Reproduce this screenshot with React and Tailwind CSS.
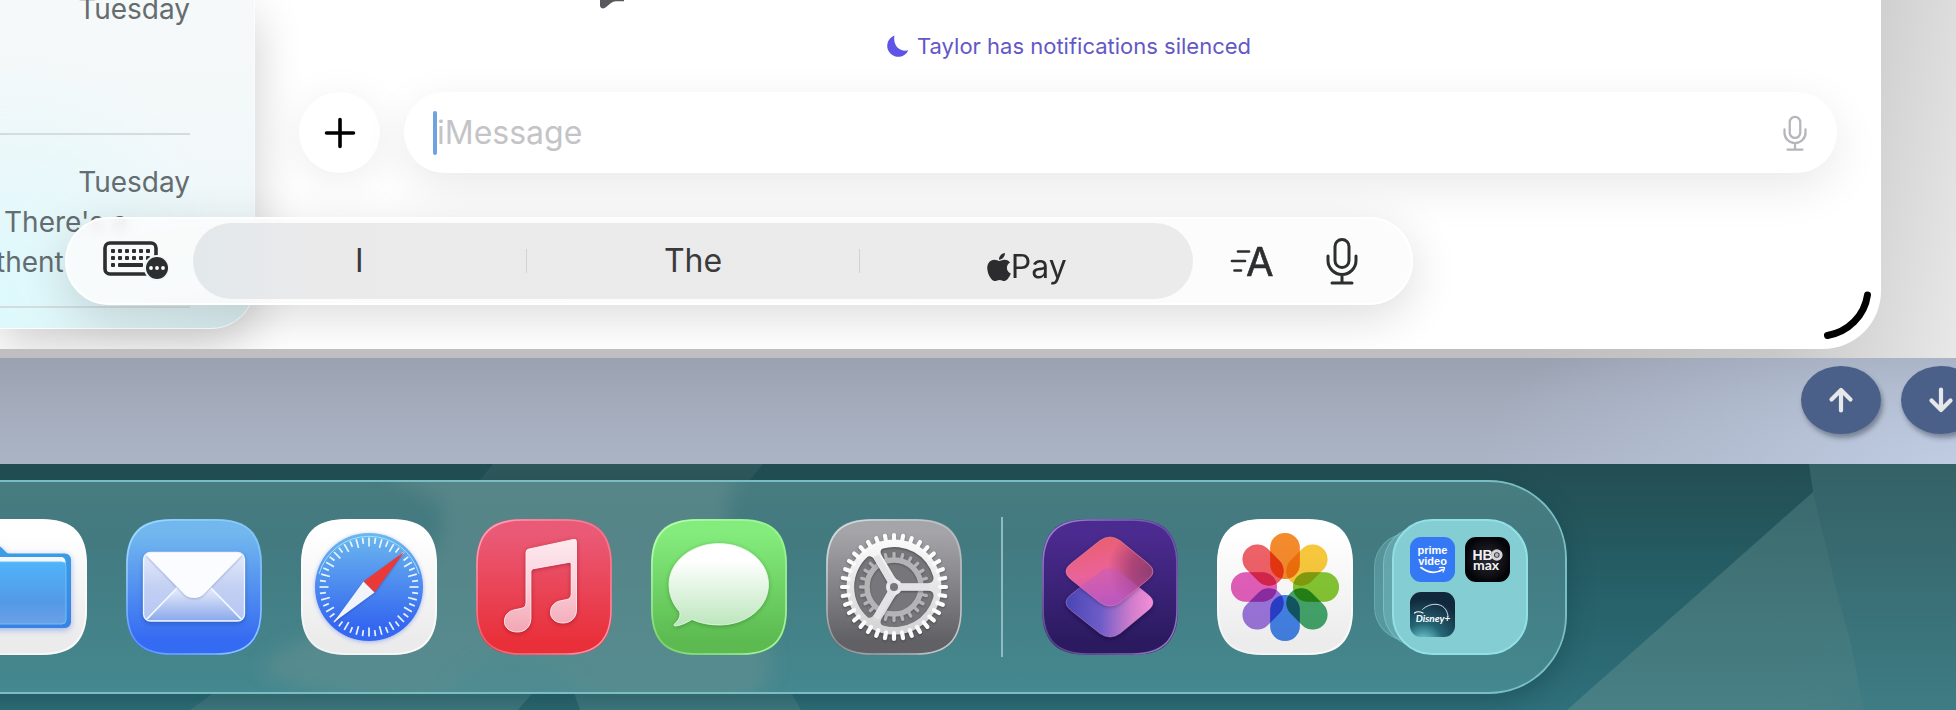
import React from "react";
import { FaApple } from "react-icons/fa6";

const SQUIRCLE =
  "M0 46C0 14 14 0 46 0H90C122 0 136 14 136 46V90C136 122 122 136 90 136H46C14 136 0 122 0 90Z";
const SQUIRCLE_EDGE =
  "M1 46C1 15 15 1 46 1H90C121 1 135 15 135 46V90C135 121 121 135 90 135H46C15 135 1 121 1 90Z";

function Tile({ id, from, to, edge, label, children }) {
  return (
    <button type="button" aria-label={label} className="block size-[136px] shrink-0">
      <svg viewBox="0 0 136 136" className="isolate block size-full">
        <defs>
          <linearGradient id={`${id}-bg`} x1="0" y1="0" x2="0" y2="1">
            <stop offset="0.1" stopColor={from} />
            <stop offset="0.9" stopColor={to} />
          </linearGradient>
          <linearGradient id={`${id}-edge`} x1="0" y1="0" x2="1" y2="1">
            <stop offset="0" stopColor={edge} />
            <stop offset="0.5" stopColor={edge} stopOpacity="0.35" />
            <stop offset="1" stopColor={edge} stopOpacity="0.9" />
          </linearGradient>
        </defs>
        <path d={SQUIRCLE} fill={`url(#${id}-bg)`} />
        {children}
        <path d={SQUIRCLE_EDGE} fill="none" stroke={`url(#${id}-edge)`} strokeWidth="1.6" />
      </svg>
    </button>
  );
}

function FilesIcon() {
  return (
    <Tile id="files" from="#ffffff" to="#ebebec" edge="#ffffff" label="Files">
      <defs>
        <linearGradient id="files-front" x1="0" y1="0" x2="0" y2="1">
          <stop offset="0" stopColor="#50b4fb" />
          <stop offset="0.65" stopColor="#5499e6" />
          <stop offset="1" stopColor="#6ba1e8" />
        </linearGradient>
        <linearGradient id="files-back" x1="0" y1="0" x2="0" y2="1">
          <stop offset="0" stopColor="#3a9fe6" />
          <stop offset="1" stopColor="#3b80e4" />
        </linearGradient>
      </defs>
      <path
        d="M16 33a6 6 0 0 1 6-6h24c3 0 4 1 6 3l3 3c1 1 2 1.500 4 1.500h55a6 6 0 0 1 6 6V103a6 6 0 0 1-6 6H22a6 6 0 0 1-6-6Z"
        fill="url(#files-back)"
        className="drop-shadow-[0_2px_3px_rgba(60,110,220,0.45)]"
      />
      <path d="M20 38h90q4 0 4.500 4.500V45H20z" fill="#f4f8fc" />
      <rect x="20" y="43" width="95" height="62" rx="4" fill="url(#files-front)" stroke="#6cc0f8" strokeWidth="1" />
    </Tile>
  );
}

function MailIcon() {
  return (
    <Tile id="mail" from="#72b8ee" to="#356af2" edge="#9fdcff" label="Mail">
      <defs>
        <linearGradient id="mail-body" x1="0" y1="0" x2="0" y2="1">
          <stop offset="0" stopColor="#e4ebfa" />
          <stop offset="0.5" stopColor="#c3d0f3" />
          <stop offset="1" stopColor="#b4c6f4" />
        </linearGradient>
        <linearGradient id="mail-bottom" x1="0" y1="0" x2="0" y2="1">
          <stop offset="0" stopColor="#e6ebf8" />
          <stop offset="1" stopColor="#8caaec" />
        </linearGradient>
      </defs>
      <rect
        x="17.500"
        y="33.500"
        width="101"
        height="68.500"
        rx="7"
        fill="url(#mail-body)"
        stroke="#eef7ff"
        strokeWidth="1.300"
        className="drop-shadow-[0_2px_2px_rgba(20,50,150,0.4)]"
      />
      <path d="M21 101L50 70H86L115 101Z" fill="url(#mail-bottom)" />
      <path d="M21 100L52 68M115 100L84 68" stroke="#f3fbff" strokeWidth="1.700" />
      <path
        d="M20 36q2-2.500 5-2.500h86q3 0 5 2.500L79 74q-4 5-11 5t-11-5Z"
        fill="#fbfcff"
        className="drop-shadow-[0_1px_1px_rgba(70,90,160,0.35)]"
      />
    </Tile>
  );
}

const SAFARI_TICKS = Array.from({ length: 48 }, (_, i) => i);

function SafariIcon() {
  return (
    <Tile id="safari" from="#ffffff" to="#ebebec" edge="#ffffff" label="Safari">
      <defs>
        <linearGradient id="safari-dial" x1="0" y1="0" x2="0" y2="1">
          <stop offset="0" stopColor="#6cb8ee" />
          <stop offset="0.85" stopColor="#3568f0" />
        </linearGradient>
      </defs>
      <circle cx="68" cy="68" r="54" fill="url(#safari-dial)" className="drop-shadow-[0_1px_2px_rgba(50,90,240,0.4)]" />
      <path d="M18 55A52 52 0 0 1 118 55" fill="none" stroke="#9fe4fb" strokeWidth="1" />
      <g stroke="#e9f5fd" strokeWidth="1.700">
        {SAFARI_TICKS.map((i) => (
          <line
            key={i}
            x1="68"
            x2="68"
            y1="18.500"
            y2={i % 2 ? 24.500 : 27.500}
            transform={`rotate(${i * 7.5} 68 68)`}
          />
        ))}
      </g>
      <g className="drop-shadow-[0_1px_1px_rgba(20,40,140,0.35)]">
        <path d="M103.500 32.500L62.500 62.500L73.500 73.500Z" fill="#e93a37" />
        <path d="M32.500 103.500L62.500 62.500L73.500 73.500Z" fill="#f1f4fa" />
      </g>
    </Tile>
  );
}

function MusicIcon() {
  return (
    <Tile id="music" from="#ea5a76" to="#e9303a" edge="#f7a9bf" label="Music">
      <defs>
        <linearGradient id="music-note" x1="0" y1="0" x2="0" y2="1">
          <stop offset="0" stopColor="#fde9ef" />
          <stop offset="0.45" stopColor="#fad3dd" />
          <stop offset="1" stopColor="#f3a6b4" />
        </linearGradient>
      </defs>
      <path
        d="M50 33.500q0-2.800 2.700-3.400L97.500 20.400q3-.6 3 2.300V91c0 8-6 13-13.500 13S74.500 99.500 74.500 93.500c0-6 3.800-10.500 10-11.700l6-1.200q4.700-1 4.700-5.500V45q0-2-2-1.700L57.500 49.700q-2.600.5-2.600 3V99c0 8.500-5.500 14-13.500 14-7.800 0-13-4.500-13-10.500 0-6.200 4-10.500 10.500-11.800l6-1.200q5.100-1 5.100-5.500Z"
        fill="url(#music-note)"
        stroke="#fff0f4"
        strokeWidth="0.900"
        className="drop-shadow-[0_1px_2px_rgba(120,0,20,0.45)]"
      />
    </Tile>
  );
}

function MessagesIcon() {
  return (
    <Tile id="messages" from="#84ec7c" to="#5cba50" edge="#baffb6" label="Messages">
      <defs>
        <linearGradient id="messages-bubble" x1="0" y1="0" x2="0" y2="1">
          <stop offset="0.2" stopColor="#ffffff" />
          <stop offset="1" stopColor="#bce6bc" />
        </linearGradient>
      </defs>
      <path
        d="M68 24.500C95.500 24.500 117.500 42.500 117.500 65.500S95.500 106 68 106C58 106 48.500 104 41 100.500C36 103.500 30 106.500 24.500 107C22.500 107 22.500 105.500 24 104.500C27.500 101.500 30 97 28.500 92.500C22 85.500 18 76 18 65.500C18 42.500 40.500 24.500 68 24.500Z"
        fill="url(#messages-bubble)"
        stroke="#ecfbec"
        strokeWidth="0.800"
        className="drop-shadow-[0_1px_2px_rgba(20,90,20,0.4)]"
      />
    </Tile>
  );
}

const OUTER_TEETH = Array.from({ length: 36 }, (_, i) => i * 10);
const INNER_TEETH = Array.from({ length: 24 }, (_, i) => i * 15);
const SPOKES = [0, 120, 240];

function SettingsIcon() {
  return (
    <Tile id="settings" from="#a5a5a9" to="#616064" edge="#d3e2e6" label="Settings">
      <defs>
        <linearGradient id="settings-gear" x1="0" y1="14" x2="0" y2="122" gradientUnits="userSpaceOnUse">
          <stop offset="0" stopColor="#fdfdfd" />
          <stop offset="1" stopColor="#cfcfd1" />
        </linearGradient>
      </defs>
      <circle cx="68" cy="68" r="42" fill="#77777b" />
      <g stroke="#b4b4b7" className="drop-shadow-[0_1px_1px_rgba(0,0,0,0.25)]">
        <circle cx="68" cy="68" r="27" fill="none" strokeWidth="5.500" />
        {INNER_TEETH.map((a) => (
          <line
            key={a}
            x1="68"
            x2="68"
            y1="40"
            y2="34.500"
            strokeWidth="3.300"
            strokeLinecap="round"
            transform={`rotate(${a} 68 68)`}
          />
        ))}
      </g>
      <g stroke="url(#settings-gear)" className="drop-shadow-[0_1px_1px_rgba(0,0,0,0.35)]">
        <path
          fillRule="evenodd"
          fill="url(#settings-gear)"
          stroke="none"
          d="M68 20.500a47.500 47.500 0 1 1 0 95a47.500 47.500 0 1 1 0-95ZM57 29.500Q53 31 55.500 36L68 57Q70.500 61.500 75 64.200H102Q108.500 64 107.300 57.500A40.500 40.500 0 0 0 57 29.500ZM57 106.500Q53 105 55.500 100L68 79Q70.500 74.500 75 71.800H102Q108.500 72 107.300 78.500A40.500 40.500 0 0 1 57 106.500ZM42 37.500Q46 36.500 48.500 41L61.500 62.500Q64 68 61.500 73.500L48.500 95Q46 99.500 42 98.500A40.500 40.500 0 0 1 42 37.500Z"
        />
        {OUTER_TEETH.map((a) => (
          <line
            key={a}
            x1="68"
            x2="68.010"
            y1="22"
            y2="16"
            strokeWidth="4.200"
            strokeLinecap="round"
            transform={`rotate(${a} 68 68)`}
          />
        ))}
      </g>
      <circle cx="68" cy="68" r="8" fill="#ececed" />
      {SPOKES.map((a) => (
        <line
          key={a}
          x1="68"
          y1="68"
          x2="104"
          y2="68.010"
          stroke="#e3e3e5"
          strokeWidth="6.500"
          transform={`rotate(${a} 68 68)`}
        />
      ))}
      <circle cx="68" cy="68" r="4" fill="#77777b" />
    </Tile>
  );
}

function ShortcutsIcon() {
  return (
    <Tile id="shortcuts" from="#4c2b90" to="#2b1a60" edge="#a58ad6" label="Shortcuts">
      <defs>
        <linearGradient id="shortcuts-low" x1="24" y1="80" x2="112" y2="84" gradientUnits="userSpaceOnUse">
          <stop offset="0" stopColor="#4a45b4" />
          <stop offset="0.4" stopColor="#6d5cc8" />
          <stop offset="0.75" stopColor="#d07dcc" />
          <stop offset="1" stopColor="#f78fd6" />
        </linearGradient>
        <linearGradient id="shortcuts-top" x1="56" y1="20" x2="68" y2="88" gradientUnits="userSpaceOnUse">
          <stop offset="0" stopColor="#ea5f70" />
          <stop offset="0.5" stopColor="#ea639a" />
          <stop offset="1" stopColor="#b653c0" />
        </linearGradient>
        <radialGradient id="shortcuts-shade" cx="108" cy="50" r="42" gradientUnits="userSpaceOnUse">
          <stop offset="0" stopColor="#7c3668" stopOpacity="0.800" />
          <stop offset="0.45" stopColor="#8c3468" stopOpacity="0.650" />
          <stop offset="1" stopColor="#8c3468" stopOpacity="0" />
        </radialGradient>
      </defs>
      <path
        d="M60 51.500Q68 47 76 51.500L106 75.500Q116 83.500 106 91.500L78 114.500Q68 121.500 58 114.500L29 91.500Q19 83.500 29 75.500Z"
        fill="url(#shortcuts-low)"
        stroke="#d7a0ea"
        strokeOpacity="0.500"
        strokeWidth="0.800"
        className="drop-shadow-[0_2px_2px_rgba(10,0,40,0.45)]"
      />
      <path
        d="M58 21.500Q68 14.500 78 21.500L106 44.500Q116 52.500 106 60.500L78 83.500Q68 90.500 58 83.500L29 60.500Q19 52.500 29 44.500Z"
        fill="url(#shortcuts-top)"
        className="drop-shadow-[0_1px_2px_rgba(40,0,60,0.4)]"
      />
      <path
        d="M58 21.500Q68 14.500 78 21.500L106 44.500Q116 52.500 106 60.500L78 83.500Q68 90.500 58 83.500L29 60.500Q19 52.500 29 44.500Z"
        fill="url(#shortcuts-shade)"
        stroke="#ff9cb4"
        strokeOpacity="0.600"
        strokeWidth="0.800"
      />
      <path
        d="M60 51.500Q68 47 76 51.500L96 67.500L78 83.500Q68 90.500 58 83.500L38 68Z"
        fill="#bd5cc4"
        fillOpacity="0.450"
      />
    </Tile>
  );
}

const PETALS = [
  [0, "#f58b2c"],
  [45, "#f9ca3c"],
  [90, "#86c834"],
  [135, "#45a86c"],
  [180, "#4585ea"],
  [225, "#9f78e0"],
  [270, "#e560bc"],
  [315, "#f06268"],
];

function PhotosIcon() {
  return (
    <Tile id="photos" from="#ffffff" to="#ececed" edge="#ffffff" label="Photos">
      {PETALS.map(([angle, color]) => (
        <g key={angle} className="mix-blend-multiply" transform={`rotate(${angle} 68 68)`}>
          <rect x="53.200" y="14" width="29.600" height="46" rx="14.800" fill={color} />
          <rect
            x="54"
            y="14.800"
            width="28"
            height="44.400"
            rx="14"
            fill="none"
            stroke={color}
            strokeOpacity="0.500"
            strokeWidth="1.200"
          />
        </g>
      ))}
    </Tile>
  );
}

function PrimeVideo() {
  return (
    <svg viewBox="0 0 45 45" className="block size-[45px]">
      <rect width="45" height="45" rx="11" fill="#3478f6" />
      <text fill="#fff" fontFamily="Liberation Sans, sans-serif" fontWeight="700" fontSize="11" textAnchor="middle">
        <tspan x="22.500" y="17">prime</tspan>
        <tspan x="22.500" y="27.500">video</tspan>
      </text>
      <path d="M11 30.500Q22 39 33 32.500" fill="none" stroke="#fff" strokeWidth="1.800" strokeLinecap="round" />
      <path d="M29.500 30.700Q33 30 34.500 30.500Q34.500 33 33 35" fill="none" stroke="#fff" strokeWidth="1.200" strokeLinecap="round" />
    </svg>
  );
}

function HboMax() {
  return (
    <svg viewBox="0 0 45 45" className="block size-[45px]">
      <defs>
        <radialGradient id="hbo-bg">
          <stop offset="0.2" stopColor="#23232c" />
          <stop offset="1" stopColor="#050509" />
        </radialGradient>
      </defs>
      <rect width="45" height="45" rx="11" fill="url(#hbo-bg)" />
      <text fill="#f2f2f4" fontWeight="700">
        <tspan x="7.500" y="23" fontFamily="Liberation Sans, sans-serif" fontSize="14">
          HB
        </tspan>
        <tspan x="8" y="33" fontFamily="Lato, sans-serif" fontSize="14">
          max
        </tspan>
      </text>
      <circle cx="31.800" cy="18" r="4.300" fill="#33333c" stroke="#d4d4da" strokeWidth="3" />
      <circle cx="31.800" cy="18" r="1.900" fill="#b4b4bb" />
    </svg>
  );
}

function DisneyPlus() {
  return (
    <svg viewBox="0 0 45 45" className="block size-[45px]">
      <defs>
        <radialGradient id="disney-bg" cx="0.3" cy="1.15" r="1">
          <stop offset="0.1" stopColor="#6cc5cf" />
          <stop offset="0.45" stopColor="#256676" />
          <stop offset="1" stopColor="#11283c" />
        </radialGradient>
      </defs>
      <rect width="45" height="45" rx="11" fill="url(#disney-bg)" />
      <path d="M12.500 17.500C19 10.500 36 8.500 38 24" fill="none" stroke="#e4f2f5" strokeWidth="0.900" strokeLinecap="round" />
      <path d="M4.500 21Q8 18.500 13 21" fill="none" stroke="#fff" strokeWidth="1.200" strokeLinecap="round" />
      <text
        x="23"
        y="29.500"
        fill="#fff"
        fontFamily="Lato, sans-serif"
        fontStyle="italic"
        fontWeight="700"
        fontSize="10"
        textAnchor="middle"
      >
        Disney+
      </text>
    </svg>
  );
}

function AppStack() {
  return (
    <button type="button" aria-label="Entertainment" className="relative block size-[136px] shrink-0">
      <span className="absolute inset-y-[14px] -left-[18px] w-[100px] rounded-[34px] border border-[#8fd6dc]/30 bg-[#84cdd3]/30" />
      <span className="absolute inset-y-[7px] -left-[9px] w-[100px] rounded-[38px] border border-[#8fd6dc]/50 bg-[#84cdd3]/30" />
      <span className="relative grid size-full grid-cols-2 gap-[10px] rounded-[40px] border-2 border-[#92e0e6] bg-[#84cdd3] p-4">
        <PrimeVideo />
        <HboMax />
        <DisneyPlus />
      </span>
    </button>
  );
}

function MicIcon({ className }) {
  return (
    <svg
      viewBox="0 0 32 48"
      className={className}
      fill="none"
      stroke="currentColor"
      strokeWidth="3"
      strokeLinecap="round"
      strokeLinejoin="round"
    >
      <rect x="9" y="2.500" width="14" height="28" rx="7" />
      <path d="M2 19v4.500a14 14 0 0 0 28 0V19M16 37.500V46M6 46H26" />
    </svg>
  );
}

const KEY_COLUMNS = [10, 17, 24, 31, 38, 45];

function KeyboardIcon() {
  return (
    <svg viewBox="0 0 66 40" className="block h-10 w-[66px]">
      <rect x="2" y="2" width="51" height="31" rx="5" fill="none" stroke="#2c2e2f" strokeWidth="3.600" />
      <g fill="#2c2e2f">
        {KEY_COLUMNS.map((x) => (
          <rect key={x} x={x - 2} y="8" width="4" height="4" rx="1" />
        ))}
        {KEY_COLUMNS.map((x) => (
          <rect key={x} x={x - 2} y="15" width="4" height="4" rx="1" />
        ))}
        <rect x="8" y="22" width="4" height="4" rx="1" />
        <rect x="15" y="22" width="25" height="4" rx="1" />
      </g>
      <circle cx="54" cy="27" r="13" fill="#f1f8fa" />
      <circle cx="54" cy="27" r="11" fill="#2c2e2f" />
      <g fill="#fff">
        <circle cx="48" cy="27" r="1.900" />
        <circle cx="54" cy="27" r="1.900" />
        <circle cx="60" cy="27" r="1.900" />
      </g>
    </svg>
  );
}

function FormatIcon() {
  return (
    <svg viewBox="0 0 44 36" className="block h-9 w-11" fill="none" stroke="#2c2e2f" strokeLinecap="round">
      <path d="M8 8.500H19M2 18H15M4.500 27.500H11" strokeWidth="2.700" />
      <text
        x="16"
        y="33"
        fill="#2c2e2f"
        strokeWidth="0.600"
        strokeLinejoin="round"
        fontFamily="Inter, sans-serif"
        fontSize="40"
      >
        A
      </text>
    </svg>
  );
}

function Conversation({ lines }) {
  return (
    <li className="mr-16 flex h-[173px] flex-col border-b-2 border-[#d3dcdf] pt-[27px] text-[28px] leading-10 text-[#646d70]">
      <span className="self-end">Tuesday</span>
      {lines.map((line) => (
        <span key={line.text} className={line.className}>
          {line.text}
        </span>
      ))}
    </li>
  );
}

function Sidebar() {
  return (
    <aside className="relative w-[255px] shrink-0 rounded-br-[44px] border-r border-b border-white/70 bg-[radial-gradient(circle_240px_at_0%_90%,#defafd_0%,rgba(226,248,251,0.7)_40%,rgba(236,247,250,0)_100%),linear-gradient(to_bottom,#f6f9f9_0%,#f2f8fa_50%,#edf7f9_70%,#d6eaed_100%)] pb-5 shadow-[0_16px_48px_rgba(0,0,0,0.2)]">
      <ul className="-mt-[38px]">
        <Conversation lines={[]} />
        <Conversation
          lines={[
            { text: "There's a", className: "pl-1" },
            { text: "thent", className: "-ml-1" },
          ]}
        />
      </ul>
    </aside>
  );
}

function ChatPane() {
  return (
    <main className="relative min-w-0 flex-1 px-11 pt-[31px]">
      <svg viewBox="0 0 26 10" className="absolute top-0 left-[345px] h-[10px] w-[26px]">
        <path d="M0 0V6Q1 10 5.500 7.500L11 3Q13 1.500 16 1.200H24V0Z" fill="#58585d" />
      </svg>
      <p className="flex items-center justify-center gap-2 text-[22px] leading-[30px] text-[#6358c4]">
        <svg viewBox="0 0 24 24" className="size-6">
          <path d="M9.500 1.500A11 11 0 1 0 23.300 16.300C15 18.500 7.500 11.500 9.500 1.500Z" fill="#5e55e6" />
        </svg>
        Taylor has notifications silenced
      </p>
      <div className="mt-[31px] flex items-center gap-6">
        <button
          type="button"
          aria-label="Add attachment"
          className="grid size-[81px] shrink-0 place-items-center rounded-full bg-white shadow-[0_8px_44px_rgba(0,0,0,0.08)]"
        >
          <svg viewBox="0 0 32 32" className="size-8" stroke="#000" strokeWidth="3.600" strokeLinecap="round">
            <path d="M16 2.500V29.500M2.500 16H29.500" />
          </svg>
        </button>
        <label className="flex h-[81px] min-w-0 flex-1 items-center rounded-full bg-white pr-[30px] pl-[29px] shadow-[0_14px_48px_rgba(0,0,0,0.09)]">
          <span className="h-11 w-1 rounded-full bg-[#6ea2e2]" />
          <input
            type="text"
            aria-label="iMessage"
            placeholder="iMessage"
            className="min-w-0 flex-1 bg-transparent text-[32px] leading-10 outline-none placeholder:text-[#c4c4c7]"
          />
          <button type="button" aria-label="Record audio">
            <MicIcon className="block h-9 w-6 text-[#b5b5bb]" />
          </button>
        </label>
      </div>
    </main>
  );
}

function SuggestionBar() {
  return (
    <div className="absolute top-[217px] left-[65px] flex h-[88px] w-[1348px] items-center rounded-full border-2 border-white bg-[#fbfcfc]/85 shadow-[0_12px_48px_rgba(0,0,0,0.14)] backdrop-blur-[6px]">
      <button type="button" aria-label="Keyboard options" className="ml-9 shrink-0">
        <KeyboardIcon />
      </button>
      <div className="ml-6 flex h-[76px] flex-1 items-center rounded-full bg-[linear-gradient(to_right,#e2e8eb_0%,#eaeaeb_12%,#ebebeb_100%)] text-[32px] leading-10 text-[#3a3a3c]">
        <button type="button" className="flex-1">
          I
        </button>
        <span className="h-6 w-px bg-[#d2d2d4]" />
        <button type="button" className="flex-1">
          The
        </button>
        <span className="h-6 w-px bg-[#d2d2d4]" />
        <button type="button" className="flex flex-1 items-center justify-center pt-3 text-[#2c2c2e]">
          <FaApple className="h-8 w-6" />
          Pay
        </button>
      </div>
      <div className="flex items-center gap-[52px] pr-[53px] pl-[37px]">
        <button type="button" aria-label="Formatting">
          <FormatIcon />
        </button>
        <button type="button" aria-label="Dictate">
          <MicIcon className="block h-12 w-8 text-[#2c2e2f]" />
        </button>
      </div>
    </div>
  );
}

function MessagesWindow() {
  return (
    <section className="relative bg-[linear-gradient(100deg,#bfbec0_0%,#bfbec0_78%,#c8c8c8_91%,#e8e8e8_100%)] pr-[75px] pb-[9px]">
      <div className="relative flex overflow-hidden rounded-br-[58px] bg-white pb-5">
        <Sidebar />
        <ChatPane />
        <SuggestionBar />
        <svg viewBox="0 0 50 50" className="absolute right-[9px] bottom-[8px] size-[50px]">
          <path d="M45.500 4C42.500 25 26 41 5.500 44.500" fill="none" stroke="#000" strokeWidth="7" strokeLinecap="round" />
        </svg>
      </div>
    </section>
  );
}

function RoundArrow({ label, d }) {
  return (
    <button
      type="button"
      aria-label={label}
      className="grid h-[68px] w-20 shrink-0 place-items-center rounded-[50%] bg-[#4b6089] shadow-[2px_4px_5px_rgba(40,50,70,0.45)]"
    >
      <svg
        viewBox="0 0 26 26"
        className="size-[26px]"
        fill="none"
        stroke="#e6e7e9"
        strokeWidth="4.200"
        strokeLinecap="round"
        strokeLinejoin="round"
      >
        <path d={d} />
      </svg>
    </button>
  );
}

function ScrollStrip() {
  return (
    <nav className="flex h-[106px] justify-end overflow-hidden bg-[radial-gradient(ellipse_480px_200px_at_100%_100%,#bfcce2_0%,rgba(186,198,220,0.6)_45%,transparent_100%),linear-gradient(to_bottom,#9aa1b1_0%,#a3abbb_40%,#abb4c5_100%)] pt-2">
      <div className="-mr-[25px] flex gap-5">
        <RoundArrow label="Scroll up" d="M13 23.500V3M3.500 12.500L13 3L22.500 12.500" />
        <RoundArrow label="Scroll down" d="M13 2.500V23M3.500 13.500L13 23L22.500 13.500" />
      </div>
    </nav>
  );
}

function Wallpaper() {
  return (
    <svg viewBox="0 464 1956 246" preserveAspectRatio="none" className="absolute inset-0 size-full">
      <defs>
        <linearGradient id="wall" x1="0" y1="0" x2="0" y2="1">
          <stop offset="0" stopColor="#224e53" />
          <stop offset="0.5" stopColor="#265f67" />
          <stop offset="1" stopColor="#2f707a" />
        </linearGradient>
        <linearGradient id="wall-facet" x1="0" y1="0" x2="0" y2="1">
          <stop offset="0" stopColor="#3b6a6d" />
          <stop offset="1" stopColor="#488085" />
        </linearGradient>
        <linearGradient id="wall-side" x1="0" y1="0" x2="0" y2="1">
          <stop offset="0" stopColor="#346166" />
          <stop offset="1" stopColor="#3e7c84" />
        </linearGradient>
        <linearGradient id="wall-fade" x1="1800" y1="0" x2="1956" y2="0" gradientUnits="userSpaceOnUse">
          <stop offset="0" stopColor="#3e7c84" stopOpacity="0" />
          <stop offset="1" stopColor="#3e7c84" stopOpacity="0.9" />
        </linearGradient>
      </defs>
      <rect y="464" width="1956" height="246" fill="url(#wall)" />
      <path d="M1813 492L1567 710H1956V492Z" fill="url(#wall-facet)" />
      <path d="M1750 640H1956V710H1750Z" fill="url(#wall-fade)" />
      <path d="M1809 464H1956V710H1864L1850 640L1838 597L1813 492Z" fill="url(#wall-side)" />
      <path d="M493 464H763L740 492H470Z" fill="#2e585c" />
      <path d="M190 710L212 694H792L801 710Z" fill="#417a80" />
      <path d="M518 710L535 690H573L580 710Z" fill="#2d6870" />
    </svg>
  );
}

function DockGlass() {
  return (
    <svg viewBox="-88 480 1654 214" preserveAspectRatio="none" className="absolute inset-0 size-full">
      <defs>
        <linearGradient id="glass" x1="0" y1="0" x2="0" y2="1">
          <stop offset="0" stopColor="#487c80" />
          <stop offset="0.3" stopColor="#427a80" />
          <stop offset="1" stopColor="#45888f" />
        </linearGradient>
        <filter id="soft" x="-20%" y="-20%" width="140%" height="140%">
          <feGaussianBlur stdDeviation="9" />
        </filter>
      </defs>
      <rect x="-88" y="480" width="1654" height="214" fill="url(#glass)" />
      <path
        d="M380 470L440 500Q450 530 425 560L330 630Q270 650 262 668Q280 690 400 705H735Q775 690 770 650L725 590V530Q722 505 740 470Z"
        fill="#6b9293"
        fillOpacity="0.450"
        filter="url(#soft)"
      />
      <path d="M440 710Q460 660 500 655Q560 650 600 710Z" fill="#458990" fillOpacity="0.400" filter="url(#soft)" />
    </svg>
  );
}

function Dock() {
  return (
    <div className="relative -ml-[88px] w-fit overflow-hidden rounded-[78px] shadow-[0_8px_24px_rgba(10,50,56,0.35)]">
      <DockGlass />
      <div className="relative flex items-center gap-[39px] rounded-[78px] border-2 border-[#7fc3ca]/90 px-[37px] py-[35px]">
        <FilesIcon />
        <MailIcon />
        <SafariIcon />
        <MusicIcon />
        <MessagesIcon />
        <SettingsIcon />
        <span className="h-[140px] w-0.5 bg-[#8fbcc1]" />
        <ShortcutsIcon />
        <PhotosIcon />
        <AppStack />
      </div>
    </div>
  );
}

export default function App() {
  return (
    <div className="flex min-h-screen flex-col overflow-hidden font-[Inter,'Liberation_Sans',sans-serif]">
      <MessagesWindow />
      <ScrollStrip />
      <section className="relative flex-1 py-4">
        <Wallpaper />
        <Dock />
      </section>
    </div>
  );
}
